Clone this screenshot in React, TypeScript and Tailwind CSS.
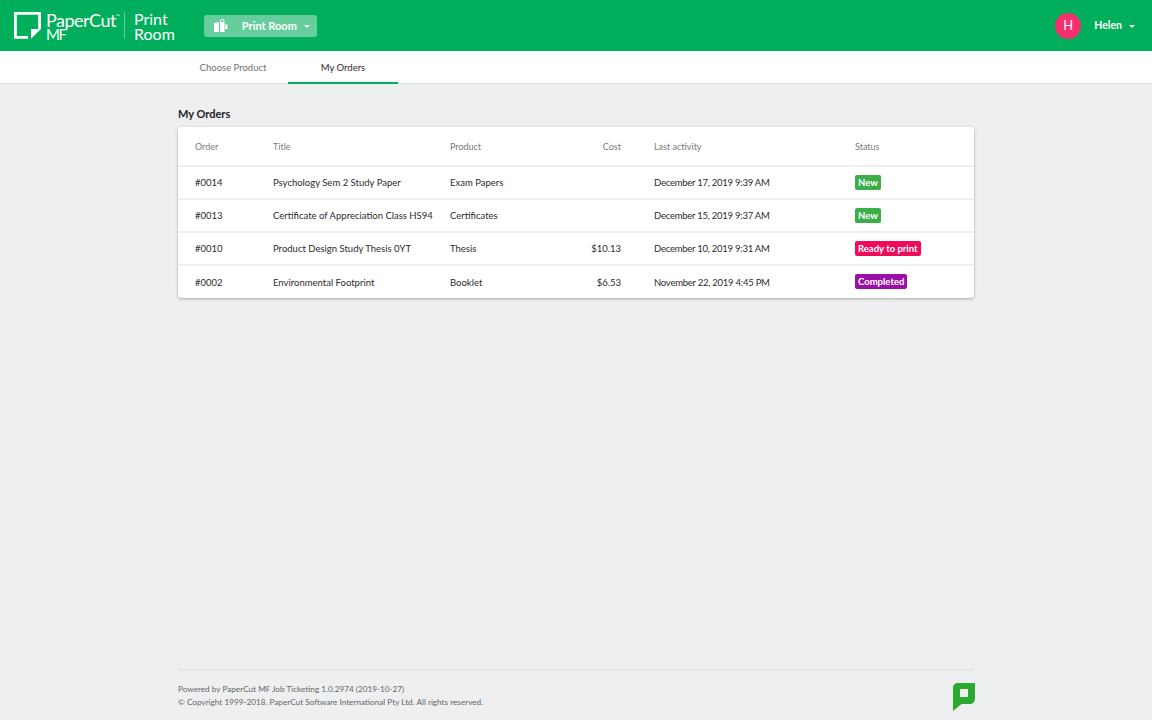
const font = { fontFamily: 'Lato, "Noto Sans", sans-serif' };

const orders = [
  { id: "#0014", title: "Psychology Sem 2 Study Paper", product: "Exam Papers", cost: "", date: "December 17, 2019 9:39 AM", status: "New", color: "bg-[#3cae49]" },
  { id: "#0013", title: "Certificate of Appreciation Class HS94", product: "Certificates", cost: "", date: "December 15, 2019 9:37 AM", status: "New", color: "bg-[#3cae49]" },
  { id: "#0010", title: "Product Design Study Thesis 0YT", product: "Thesis", cost: "$10.13", date: "December 10, 2019 9:31 AM", status: "Ready to print", color: "bg-[#ee0b5c]" },
  { id: "#0002", title: "Environmental Footprint", product: "Booklet", cost: "$6.53", date: "November 22, 2019 4:45 PM", status: "Completed", color: "bg-[#9b0fa8]" },
];

const Caret = () => (
  <span className="ml-[7px] mt-[1px] h-0 w-0 border-x-[3px] border-t-[3px] border-x-transparent border-t-white/90" />
);

const Logo = () => (
  <div className="flex items-center">
    <svg width="28" height="27" viewBox="0 0 28 27" className="shrink-0">
      <path d="M0 0H27V17H24.2V2.8H2.8V24H14V26.8H0Z" fill="#fff" />
      <path d="M17 17H27L17 26.8Z" fill="#fff" />
    </svg>
    <div className="ml-[4px] flex w-[78px] flex-col text-white">
      <div className="flex text-[18px] leading-[16px] tracking-[-0.5px]">PaperCut<span className="text-[5px] leading-[8px]">™</span></div>
      <div className="text-[15px] leading-[12px] tracking-[-1.5px]">MF</div>
    </div>
    <div className="mr-[9px] h-[27px] w-px bg-white/40" />
    <div className="text-[16px] leading-[15px] text-white">
      <div>Print</div>
      <div>Room</div>
    </div>
  </div>
);

export default function App() {
  return (
    <div style={font} className="flex h-[720px] flex-col overflow-hidden bg-[#eeeff1] text-[9.5px] text-[#2b2b2b]">
      <header className="flex h-[51px] items-center bg-[#00ae5b] pl-[14px] pr-[17px]">
        <Logo />
        <button className="ml-[29px] flex h-[22px] w-[113px] items-center rounded-[3px] bg-[#66ce9d] pl-[10px] text-[11px] font-bold text-white">
          <svg width="14" height="14" viewBox="0 0 14 14">
            <path d="M0 4L5 3V13H0Z M6 3H10.5V13H6Z" fill="#fff" />
            <path d="M6.7 3V1.2C6.7 .2 9.8 .2 9.8 1.2V3" fill="none" stroke="#fff" strokeWidth=".9" />
            <path d="M11 5.5H13.5V10H11Z" fill="#fff" />
          </svg>
          <span className="ml-[14px] pt-[1px]">Print Room</span>
          <Caret />
        </button>
        <div className="ml-auto flex items-center">
          <div className="flex h-[26px] w-[26px] items-center justify-center rounded-full bg-[#f5306f] text-[13px] text-white">H</div>
          <span className="ml-[13px] pt-[1px] text-[10.5px] font-bold text-white">Helen</span>
          <Caret />
        </div>
      </header>

      <nav className="h-[33px] border-b border-[#e2e3e6] bg-white">
        <div className="mx-auto flex w-[796px]">
          <div className="flex h-[33px] w-[110px] items-center justify-center pt-[2px] text-[#6f6f6f]">Choose Product</div>
          <div className="flex h-[33px] w-[110px] items-center justify-center border-b-2 border-[#00ae5b] pt-[4px]">My Orders</div>
        </div>
      </nav>

      <main className="mx-auto flex w-[796px] flex-1 flex-col">
        <h1 className="mt-[22px] text-[11px] font-bold leading-[16px] text-[#222]">My Orders</h1>
        <div className="mt-[5px] rounded-[3px] bg-white shadow-[0_1px_3px_rgba(0,0,0,0.3)]">
          <table className="w-full table-fixed">
            <thead>
              <tr className="h-[39px] text-left text-[9px] text-[#7a7a7a]">
                <th className="w-[95px] pl-[17px] pt-[2px] font-normal">Order</th>
                <th className="w-[177px] pt-[2px] font-normal">Title</th>
                <th className="w-[110px] pt-[2px] font-normal">Product</th>
                <th className="w-[61px] pt-[2px] text-right font-normal">Cost</th>
                <th className="w-[234px] pl-[33px] pt-[2px] font-normal">Last activity</th>
                <th className="pt-[2px] font-normal">Status</th>
              </tr>
            </thead>
            <tbody>
              {orders.map((o) => (
                <tr key={o.id} className="h-[33px] border-t-2 border-[#eeeff1]">
                  <td className="pl-[17px] pt-[2px]">{o.id}</td>
                  <td className="whitespace-nowrap pt-[2px]">{o.title}</td>
                  <td className="pt-[2px]">{o.product}</td>
                  <td className="pt-[2px] text-right">{o.cost}</td>
                  <td className="whitespace-nowrap pl-[33px] pt-[2px] tracking-[-0.25px]">{o.date}</td>
                  <td>
                    <span className={`inline-block rounded-[2px] px-[3px] text-[9.5px] font-bold leading-[15px] text-white ${o.color}`}>{o.status}</span>
                  </td>
                </tr>
              ))}
            </tbody>
          </table>
        </div>

        <footer className="mt-auto flex h-[51px] justify-between border-t border-[#dfe0e3] pt-[13px] text-[8.2px] leading-[13px] text-[#666]">
          <div>
            <div>Powered by PaperCut MF Job Ticketing 1.0.2974 (2019-10-27)</div>
            <div>© Copyright 1999-2018. PaperCut Software International Pty Ltd. All rights reserved.</div>
          </div>
          <svg width="22" height="28" viewBox="0 0 22 28" className="-mr-px">
            <path fillRule="evenodd" d="M5 0H22V15C22 19 20 21 16 21H8.5L0 28V5C0 2 2 0 5 0Z M7 6V14H15V6Z" fill="#2aaa2f" />
          </svg>
        </footer>
      </main>
    </div>
  );
}
